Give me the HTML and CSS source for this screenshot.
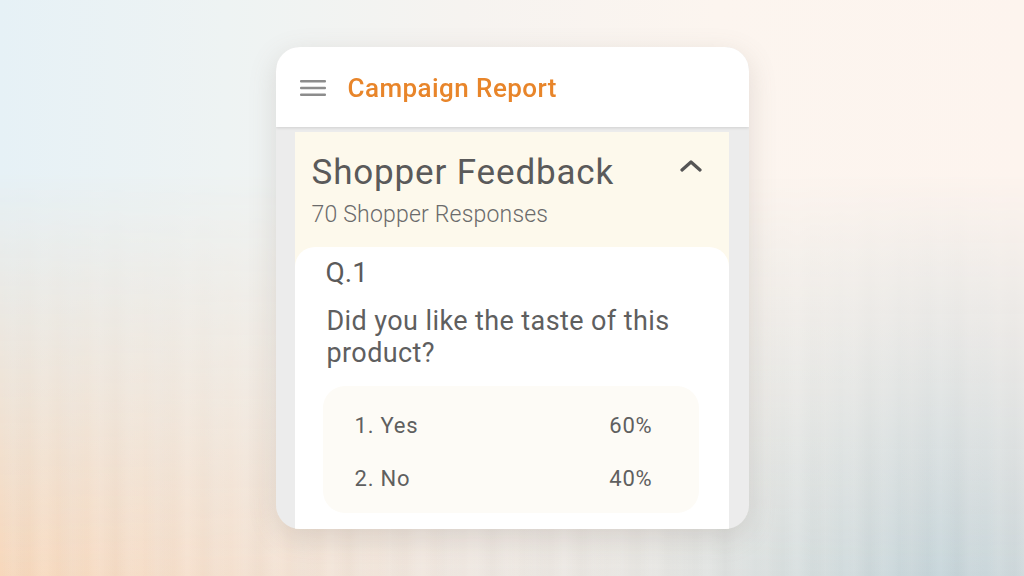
FILE: index.html
```html
<!DOCTYPE html>
<html lang="en">
<head>
    <meta charset="UTF-8">
    <meta name="viewport" content="width=device-width, initial-scale=1.0">
    <title>Campaign Report</title>
    <link rel="stylesheet" href="styles.css">
</head>
<body>

    <div class="phone">
        <div class="app-bar">
            <svg class="menu-icon" width="26" height="18" viewBox="0 0 26 18">
                <rect x="0" y="1" width="26" height="2.6" rx="1" fill="#8c8c8c"/>
                <rect x="0" y="7.7" width="26" height="2.6" rx="1" fill="#8c8c8c"/>
                <rect x="0" y="14.4" width="26" height="2.6" rx="1" fill="#8c8c8c"/>
            </svg>
            <div class="app-title">Campaign Report</div>
        </div>

        <div class="content">
            <div class="feedback">
                <div class="feedback-head">
                    <div>
                        <div class="feedback-title">Shopper Feedback</div>
                        <div class="feedback-sub">70 Shopper Responses</div>
                    </div>
                    <svg class="chevron" width="24" height="14" viewBox="0 0 24 14">
                        <path d="M3 12 L12 4 L21 12" fill="none" stroke="#555" stroke-width="3.2" stroke-linecap="round" stroke-linejoin="round"/>
                    </svg>
                </div>

                <div class="question-card">
                    <div class="q-num">Q.1</div>
                    <div class="q-text">Did you like the taste of this product?</div>
                    <div class="answers">
                        <div class="answer"><span>1. Yes</span><span>60%</span></div>
                        <div class="answer"><span>2. No</span><span>40%</span></div>
                    </div>
                </div>
            </div>
        </div>
    </div>

</body>
</html>
```

FILE: styles.css
```css
body {
    font-family: Roboto, "Noto Sans", sans-serif;
    margin: 0;
    height: 576px;
    display: flex;
    justify-content: center;
    align-items: center;
    overflow: hidden;
    background: linear-gradient(90deg, #e6f1f6 0%, #eef3f3 22%, #f6f3f0 45%, #fcf5ef 70%, #fdf4ee 100%);
}

/* lower half of the backdrop: peach on the left, blue-grey on the right */
body::before {
    content: "";
    position: fixed;
    inset: 0;
    z-index: -1;
    background:
        repeating-linear-gradient(90deg, rgba(255,255,255,0) 0px, rgba(255,255,255,0.1) 13px, rgba(255,255,255,0) 29px),
        repeating-linear-gradient(90deg, rgba(0,0,0,0) 0px, rgba(90,80,70,0.025) 21px, rgba(0,0,0,0) 47px),
        linear-gradient(90deg, #f7d7ba 0%, #f5dfcc 20%, #efe7e0 45%, #e8e6e2 62%, #d3dcdd 80%, #c4d3d8 92%, #cfd9dc 100%);
    -webkit-mask-image: linear-gradient(180deg, rgba(0,0,0,0) 30%, rgba(0,0,0,0.55) 70%, #000 100%);
    mask-image: linear-gradient(180deg, rgba(0,0,0,0) 30%, rgba(0,0,0,0.55) 70%, #000 100%);
}

.phone {
    width: 473px;
    height: 482px;
    border-radius: 24px;
    background-color: #ececec;
    overflow: hidden;
    display: flex;
    flex-direction: column;
    box-shadow: 0 8px 28px rgba(110, 100, 90, 0.18);
}

.app-bar {
    height: 80px;
    flex-shrink: 0;
    background-color: #fff;
    display: flex;
    align-items: center;
    padding: 0 24px;
    gap: 22px;
    box-shadow: 0 1px 3px rgba(0, 0, 0, 0.12);
    position: relative;
    z-index: 1;
}

.menu-icon {
    margin-top: 2px;
}

.app-title {
    color: #e8852a;
    font-size: 26px;
    font-weight: 500;
    letter-spacing: 0.45px;
    margin-top: 2px;
}

.content {
    flex: 1;
    padding: 5px 20px 0 19px;
    display: flex;
    flex-direction: column;
}

.feedback {
    flex: 1;
    background-color: #fdf9ec;
    display: flex;
    flex-direction: column;
}

.feedback-head {
    display: flex;
    justify-content: space-between;
    align-items: flex-start;
    padding: 21px 26px 19px 17px;
}

.feedback-title {
    font-size: 35px;
    line-height: 40px;
    letter-spacing: 0.85px;
    color: #5a5a5a;
}

.feedback-sub {
    font-size: 23px;
    line-height: 27px;
    letter-spacing: 0.2px;
    margin-top: 8px;
    color: #6b6b6b;
    font-weight: 300;
}

.chevron {
    margin-top: 5px;
}

.question-card {
    flex: 1;
    background-color: #fff;
    border-radius: 20px 20px 0 0;
    padding: 9px 24px 0 31px;
}

.q-num {
    font-size: 28px;
    line-height: 34px;
    color: #5a5a5a;
}

.q-text {
    font-size: 27px;
    line-height: 32px;
    letter-spacing: 0.4px;
    color: #5f5f5f;
    margin-top: 15px;
    padding-left: 1px;
}

.answers {
    margin: 17px 6px 0 -3px;
    background-color: #fdfbf6;
    border-radius: 22px;
    padding: 13px 46px 8px 32px;
}

.answer {
    display: flex;
    justify-content: space-between;
    align-items: center;
    height: 53px;
    font-size: 22px;
    letter-spacing: 0.8px;
    color: #5f5f5f;
}
```
